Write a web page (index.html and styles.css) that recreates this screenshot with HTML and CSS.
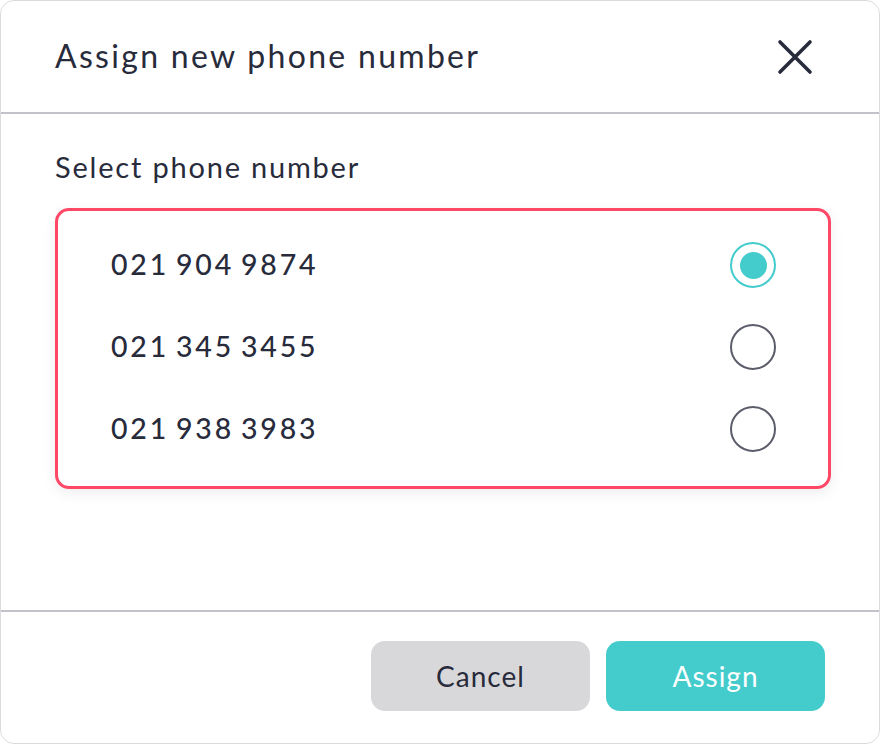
FILE: index.html
```html
<!DOCTYPE html>
<html>
<head>
<meta charset="utf-8">
<link rel="stylesheet" href="styles.css">
</head>
<body>
<div class="dialog">
  <header class="header">
    <h1 class="title">Assign new phone number</h1>
    <button class="close" aria-label="Close">
      <svg width="36" height="36" viewBox="0 0 36 36"><path d="M3 3 L33 33 M33 3 L3 33" stroke="#282b3b" stroke-width="3.6" stroke-linecap="round" fill="none"/></svg>
    </button>
  </header>
  <main class="body">
    <div class="label">Select phone number</div>
    <div class="card">
      <div class="row"><span class="num">021 904 9874</span><span class="radio checked"><span class="dot"></span></span></div>
      <div class="row"><span class="num">021 345 3455</span><span class="radio"></span></div>
      <div class="row"><span class="num">021 938 3983</span><span class="radio"></span></div>
    </div>
  </main>
  <footer class="footer">
    <button class="btn cancel">Cancel</button>
    <button class="btn assign">Assign</button>
  </footer>
</div>
</body>
</html>
```
FILE: styles.css
```css
* { box-sizing: border-box; }
html, body { margin: 0; padding: 0; background: #fff; }
body { font-family: "Lato", "Noto Sans", sans-serif; color: #282b3b; }
.dialog {
  width: 880px; height: 744px;
  border: 1px solid #dcdcdf; border-radius: 14px;
  display: flex; flex-direction: column;
  overflow: hidden;
}
.header {
  height: 113px; flex: none;
  border-bottom: 2px solid #c3c2ca;
  display: flex; align-items: center; justify-content: space-between;
  padding: 0 66px 0 54px;
}
.title { margin: 0; font-weight: 400; font-size: 32px; letter-spacing: 2.3px; padding-bottom: 2px; }
.close { background: none; border: 0; padding: 0; width: 36px; height: 36px; display: flex; cursor: pointer; }
.body { flex: 1; padding: 36px 48px 0 54px; }
.label { font-size: 29px; line-height: 34px; margin-bottom: 24px; letter-spacing: 1.8px; }
.card {
  border: 3px solid #ff4766; border-radius: 14px;
  padding: 12px 52px 17px 53px;
  box-shadow: 0 4px 14px rgba(0,0,0,0.07);
}
.row { height: 82px; display: flex; align-items: center; justify-content: space-between; }
.num { font-size: 28.5px; font-weight: 500; letter-spacing: 2.8px; word-spacing: -3px; }
.radio {
  width: 46px; height: 46px; border-radius: 50%;
  border: 2px solid #5b5d6b;
  display: flex; align-items: center; justify-content: center;
  margin-top: 2px;
}
.radio.checked { border-color: #44cccc; }
.dot { width: 27px; height: 27px; border-radius: 50%; background: #44cccc; }
.footer {
  height: 133px; flex: none;
  border-top: 2px solid #c3c2ca;
  display: flex; justify-content: flex-end; align-items: flex-start;
  padding: 29px 54px 0 0; gap: 16px;
}
.btn {
  width: 219px; height: 70px; border: 0; border-radius: 14px;
  font-family: inherit; font-size: 28px; letter-spacing: 1px; cursor: pointer;
}
.cancel { background: #d8d8da; color: #282b3b; }
.assign { background: #44cccc; color: #fff; }
```
